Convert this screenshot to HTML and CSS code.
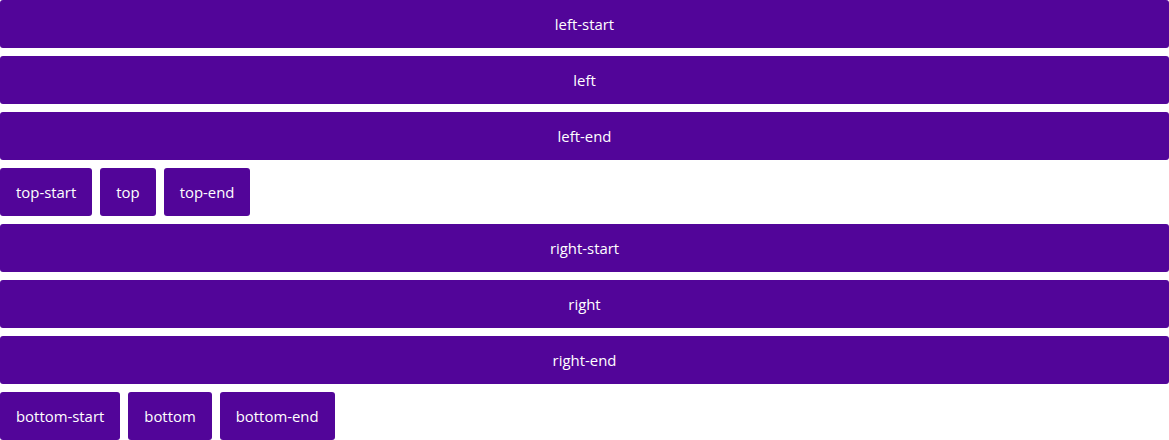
FILE: index.html
```html
<!DOCTYPE html>
<html>
<head>
<meta charset="utf-8">
<link rel="stylesheet" href="styles.css">
</head>
<body>
<div class="stack">
  <button class="btn btn-block">left-start</button>
  <button class="btn btn-block">left</button>
  <button class="btn btn-block">left-end</button>
  <div class="row">
    <button class="btn">top-start</button>
    <button class="btn">top</button>
    <button class="btn">top-end</button>
  </div>
  <button class="btn btn-block">right-start</button>
  <button class="btn btn-block">right</button>
  <button class="btn btn-block">right-end</button>
  <div class="row">
    <button class="btn">bottom-start</button>
    <button class="btn">bottom</button>
    <button class="btn">bottom-end</button>
  </div>
</div>
</body>
</html>
```
FILE: styles.css
```css
html, body {
  margin: 0;
  padding: 0;
  background: #ffffff;
}
.stack {
  display: flex;
  flex-direction: column;
  gap: 8px;
}
.row {
  display: flex;
  gap: 8px;
}
.btn {
  height: 48px;
  padding: 0 16px;
  border: none;
  border-radius: 3px;
  background: #520599;
  color: #ffffff;
  font-family: "Open Sans", "Noto Sans", sans-serif;
  font-size: 14.9px;
  line-height: 48px;
  cursor: pointer;
  margin: 0;
}
.btn-block {
  width: 100%;
}
```
